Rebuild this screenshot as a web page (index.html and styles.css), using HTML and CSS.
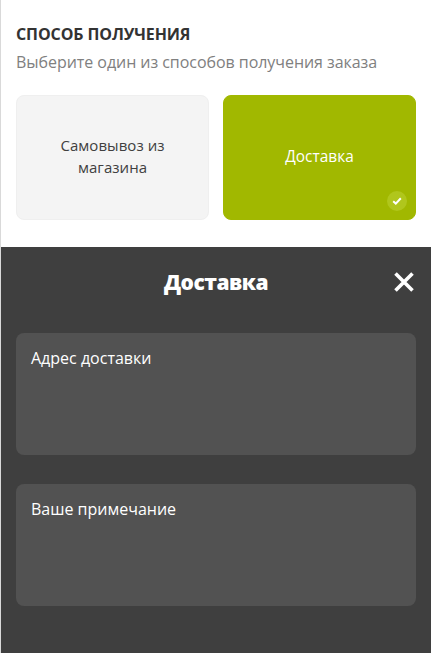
FILE: index.html
```html
<!DOCTYPE html>
<html lang="ru">
<head>
<meta charset="utf-8">
<title>Способ получения</title>
<link rel="stylesheet" href="styles.css">
</head>
<body>
<div class="page">
  <section class="method">
    <h2 class="method-title">СПОСОБ ПОЛУЧЕНИЯ</h2>
    <p class="method-sub">Выберите один из способов получения заказа</p>
    <div class="options">
      <div class="option">Самовывоз из магазина</div>
      <div class="option option-active">Доставка
        <span class="check">
          <svg width="10" height="8" viewBox="0 0 10 8"><path d="M1.2 4.2 3.8 6.6 8.8 1.2" fill="none" stroke="#fff" stroke-width="2"/></svg>
        </span>
      </div>
    </div>
  </section>
  <section class="panel">
    <header class="panel-head">
      <h3 class="panel-title">Доставка</h3>
      <svg class="close" width="22" height="22" viewBox="0 0 22 22"><path d="M2.5 2.5 19.5 19.5M19.5 2.5 2.5 19.5" fill="none" stroke="#fff" stroke-width="3.6"/></svg>
    </header>
    <div class="fields">
      <div class="field">Адрес доставки</div>
      <div class="field">Ваше примечание</div>
    </div>
  </section>
</div>
</body>
</html>
```

FILE: styles.css
```css
* { box-sizing: border-box; }
html, body { margin: 0; padding: 0; background: #fff; }
body { font-family: "Open Sans", "Liberation Sans", sans-serif; width: 431px; height: 662px; overflow: hidden; }
.page { border-left: 1px solid #d9d9d9; height: 653px; }
.method { padding: 23px 15px 27px 15px; }
.method-title { margin: 0; font-size: 16px; line-height: 22px; font-weight: 700; letter-spacing: -0.1px; color: #333; }
.method-sub { margin: 6px 0 0; font-size: 16px; line-height: 22px; letter-spacing: -0.05px; color: #808080; }
.options { display: grid; grid-template-columns: 193px 193px; gap: 14px; margin-top: 22px; }
.option { position: relative; height: 125px; display: flex; align-items: center; justify-content: center; text-align: center; padding: 0 30px 4px; border-radius: 8px; background: #f4f4f4; border: 1px solid #efefef; font-size: 15px; line-height: 22px; letter-spacing: 0.05px; color: #404040; }
.option-active { background: #a1b800; border-color: #a1b800; color: #fff; font-size: 15.4px; padding-bottom: 2px; }
.check { position: absolute; right: 8px; bottom: 8px; width: 20px; height: 20px; border-radius: 50%; background: #b0c61c; display: flex; align-items: center; justify-content: center; }
.panel { background: #3f3f3f; height: 406px; padding: 0 15px; }
.panel-head { position: relative; height: 86px; display: flex; align-items: flex-start; justify-content: center; padding-top: 20px; }
.panel-title { margin: 0; font-size: 21px; line-height: 30px; font-weight: 800; letter-spacing: -0.5px; color: #fff; }
.close { position: absolute; right: 1px; top: 24px; }
.fields { display: flex; flex-direction: column; gap: 29px; }
.field { height: 122px; background: #525252; border-radius: 8px; padding: 14px 15px; font-size: 16px; line-height: 22px; color: #fff; }
```
